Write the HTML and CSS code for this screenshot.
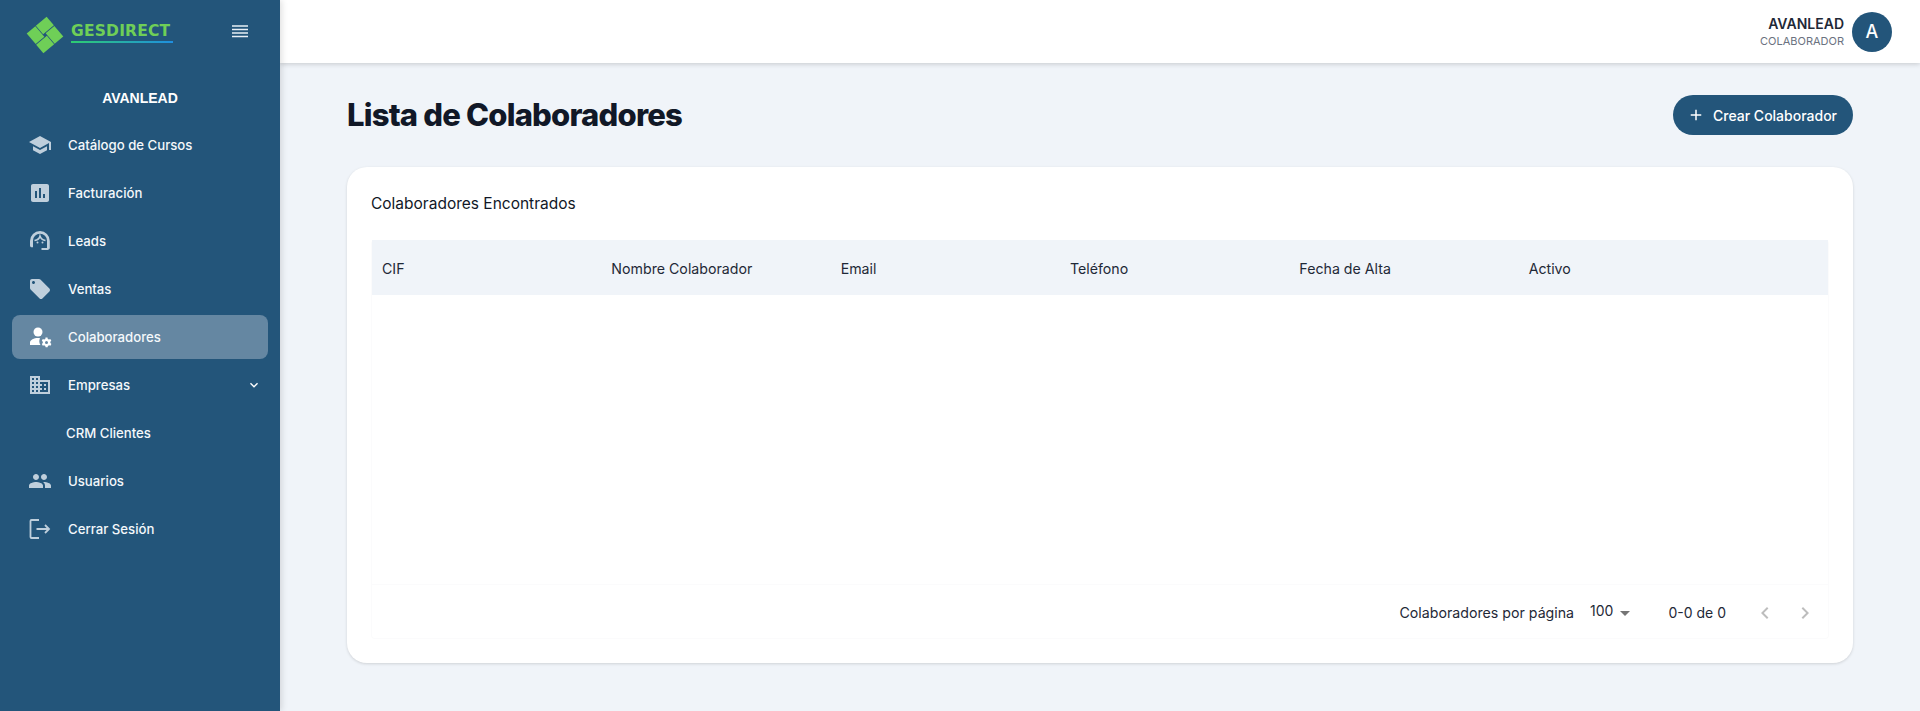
FILE: index.html
```html
<!DOCTYPE html>
<html lang="es">
<head>
<meta charset="utf-8">
<title>Lista de Colaboradores</title>
<link rel="stylesheet" href="styles.css">
</head>
<body>
<div class="app">
  <aside class="sidebar">
    <div class="brand">
      <svg class="logo-mark" width="40" height="40" viewBox="-20 -20 40 40" aria-hidden="true">
        <g fill="#6fcf57" transform="rotate(-40)">
          <rect x="-1" y="-13" width="14" height="11.300" />
          <rect x="1.700" y="-1" width="11.300" height="14" />
          <rect x="-13" y="1.700" width="14" height="11.300" />
          <rect x="-13" y="-13" width="11.300" height="14" />
        </g>
      </svg>
      <div class="wordmark">
        <span class="wordmark-text">GESDIRECT</span>
        <span class="wordmark-line"></span>
      </div>
      <button class="menu-btn" aria-label="Menú">
        <svg width="16" height="14" viewBox="0 0 16 14"><path d="M0 1h16M0 4.500h16M0 8h16M0 11.500h16" stroke="#e8eff5" stroke-width="1.600" fill="none"/></svg>
      </button>
    </div>
    <div class="org">AVANLEAD</div>
    <nav class="nav">
      <a class="nav-item">
        <svg class="nav-icon" viewBox="0 0 24 24"><path d="M5 13.180v4L12 21l7-3.820v-4L12 17l-7-3.820zM12 3 1 9l11 6 9-4.910V17h2V9L12 3z"/></svg>
        <span>Catálogo de Cursos</span>
      </a>
      <a class="nav-item">
        <svg class="nav-icon" viewBox="0 0 24 24"><path d="M19 3H5c-1.100 0-2 .9-2 2v14c0 1.100.9 2 2 2h14c1.100 0 2-.9 2-2V5c0-1.100-.9-2-2-2zM9 17H7v-7h2v7zm4 0h-2V7h2v10zm4 0h-2v-4h2v4z"/></svg>
        <span>Facturación</span>
      </a>
      <a class="nav-item">
        <svg class="nav-icon" viewBox="0 0 24 24"><path d="M12 2A10 10 0 0 0 2 12v4.500c0 1 .8 1.800 1.800 1.800H5v-6.500a7 7 0 0 1 14 0v7.300h-5.500V21h6c1.100 0 2.300-.8 2.300-1.900V12A10 10 0 0 0 12 2z"/><path d="M6.500 11.500C9.500 11 11.500 9.500 12 7c.8 2.500 3 4.200 5.500 4.500" fill="none" stroke="#bfcfdc" stroke-width="1.500"/><circle cx="9.500" cy="13.500" r="1"/><circle cx="14.500" cy="13.500" r="1"/></svg>
        <span>Leads</span>
      </a>
      <a class="nav-item">
        <svg class="nav-icon" viewBox="0 0 24 24"><path d="m21.410 11.580-9-9C12.050 2.220 11.550 2 11 2H4c-1.100 0-2 .9-2 2v7c0 .55.220 1.050.59 1.420l9 9c.36.36.86.58 1.410.58.55 0 1.050-.22 1.410-.59l7-7c.37-.36.59-.86.59-1.410 0-.55-.23-1.060-.59-1.420zM5.500 7C4.670 7 4 6.330 4 5.500S4.670 4 5.500 4 7 4.670 7 5.500 6.330 7 5.500 7z"/></svg>
        <span>Ventas</span>
      </a>
      <a class="nav-item is-active">
        <svg class="nav-icon" viewBox="0 0 24 24"><circle cx="10" cy="7" r="4.500"/><path d="M10 13c-4 0-8 2-8 4.500V20h10.500a7 7 0 0 1-.5-6.800c-.6-.1-1.300-.2-2-.2z"/><path fill-rule="evenodd" d="M17.500 12.500h2l.3 1.400 1.200.6 1.300-.5 1 1.700-1 1 .1 1.300 1 1-1 1.700-1.300-.5-1.200.7-.3 1.400h-2l-.3-1.400-1.200-.7-1.300.5-1-1.700 1-1v-1.300l-1-1 1-1.700 1.300.5 1.200-.6zm1 3.500a1.500 1.500 0 1 0 0 3 1.500 1.500 0 0 0 0-3z"/></svg>
        <span>Colaboradores</span>
      </a>
      <a class="nav-item">
        <svg class="nav-icon" viewBox="0 0 24 24"><path d="M12 7V3H2v18h20V7H12zM6 19H4v-2h2v2zm0-4H4v-2h2v2zm0-4H4V9h2v2zm0-4H4V5h2v2zm4 12H8v-2h2v2zm0-4H8v-2h2v2zm0-4H8V9h2v2zm0-4H8V5h2v2zm10 12h-8v-2h2v-2h-2v-2h2v-2h-2V9h8v10zm-2-8h-2v2h2v-2zm0 4h-2v2h2v-2z"/></svg>
        <span class="nav-label-grow">Empresas</span>
        <svg class="nav-chevron" viewBox="0 0 24 24"><path d="M7.410 8.590 12 13.170l4.590-4.580L18 10l-6 6-6-6z"/></svg>
      </a>
      <a class="nav-item nav-sub"><span>CRM Clientes</span></a>
      <a class="nav-item">
        <svg class="nav-icon" viewBox="0 0 24 24"><path d="M16 11c1.660 0 2.990-1.340 2.990-3S17.660 5 16 5c-1.660 0-3 1.340-3 3s1.340 3 3 3zm-8 0c1.660 0 2.990-1.340 2.990-3S9.660 5 8 5C6.340 5 5 6.340 5 8s1.340 3 3 3zm0 2c-2.330 0-7 1.170-7 3.500V19h14v-2.500c0-2.330-4.670-3.500-7-3.500zm8 0c-.29 0-.62.020-.97.050 1.160.84 1.970 1.970 1.970 3.450V19h6v-2.500c0-2.330-4.670-3.500-7-3.500z"/></svg>
        <span>Usuarios</span>
      </a>
      <a class="nav-item">
        <svg class="nav-icon nav-icon-line" viewBox="0 0 24 24"><path d="M11 3H3.500a1 1 0 0 0-1 1v16a1 1 0 0 0 1 1H11M8.500 12H21M17 8l4 4-4 4"/></svg>
        <span>Cerrar Sesión</span>
      </a>
    </nav>
  </aside>
  <div class="main">
    <header class="topbar">
      <div class="user">
        <div class="user-name">AVANLEAD</div>
        <div class="user-role">COLABORADOR</div>
      </div>
      <div class="avatar">A</div>
    </header>
    <main class="content">
      <div class="page-head">
        <h1 class="page-title">Lista de Colaboradores</h1>
        <button class="primary-btn">
          <svg width="18" height="18" viewBox="0 0 24 24"><path d="M12 5v14M5 12h14" stroke="#fff" stroke-width="2" fill="none"/></svg>
          <span>Crear Colaborador</span>
        </button>
      </div>
      <section class="card">
        <h2 class="card-title">Colaboradores Encontrados</h2>
        <div class="grid">
          <div class="grid-head">
            <div>CIF</div>
            <div>Nombre Colaborador</div>
            <div>Email</div>
            <div>Teléfono</div>
            <div>Fecha de Alta</div>
            <div>Activo</div>
          </div>
          <div class="grid-body"></div>
          <div class="grid-foot">
            <span>Colaboradores por página</span>
            <span class="page-size">100<svg width="24" height="24" viewBox="0 0 24 24"><path d="m7 10 5 5 5-5z" fill="#757575"/></svg></span>
            <span class="range">0-0 de 0</span>
            <span class="pager">
              <svg width="24" height="24" viewBox="0 0 24 24"><path d="M15.410 7.410 14 6l-6 6 6 6 1.410-1.410L10.830 12z" fill="#bdbdbd"/></svg>
              <svg width="24" height="24" viewBox="0 0 24 24"><path d="M10 6 8.590 7.410 13.170 12l-4.580 4.590L10 18l6-6z" fill="#bdbdbd"/></svg>
            </span>
          </div>
        </div>
      </section>
    </main>
  </div>
</div>
</body>
</html>
```
FILE: styles.css
```css
* { box-sizing: border-box; }
html, body { margin: 0; height: 100%; }
body { font-family: "Inter", "Noto Sans", sans-serif; color: #111827; background: #f0f4f9; }
.app { display: flex; height: 711px; overflow: hidden; }

.sidebar { width: 280px; flex: none; background: #23557a; color: #fff; box-shadow: 2px 0 6px rgba(0,0,0,.12); position: relative; z-index: 2; padding: 0 12px; }
.brand { height: 63px; display: flex; align-items: center; padding-left: 13px; }
.logo-mark { flex: none; margin-top: 7px; }
.wordmark { display: flex; flex-direction: column; margin-left: 6px; margin-top: 2px; width: 102px; }
.wordmark-text { font: 700 15.500px/16px "DejaVu Sans", sans-serif; color: #6fcf57; letter-spacing: .2px; white-space: nowrap; }
.wordmark-line { height: 2px; margin-top: 2px; background: linear-gradient(90deg, #2ecc71, #1f8fe0); }
.menu-btn { background: none; border: 0; padding: 0; margin-left: 59px; display: flex; }

.org { text-align: center; font: 700 14px/20px "Liberation Sans", sans-serif; margin-top: 25px; margin-bottom: 15px; }
.nav { display: flex; flex-direction: column; gap: 4px; }
.nav-item { height: 44px; border-radius: 8px; display: flex; align-items: center; padding: 0 4px 0 16px; font-size: 13.200px; font-weight: 500; color: #f4f8fb; }
.nav-item.is-active { background: #6587a2; }
.nav-icon { width: 24px; height: 24px; fill: #bfcfdc; flex: none; margin-right: 16px; }
.is-active .nav-icon { fill: #fff; }
.nav-icon-line { fill: none; stroke: #bfcfdc; stroke-width: 1.800; }
.nav-label-grow { flex: 1; }
.nav-chevron { width: 16px; height: 16px; fill: #fff; flex: none; margin-right: 2px; }
.nav-sub { padding-left: 54px; }

.main { flex: 1; min-width: 0; display: flex; flex-direction: column; }
.topbar { height: 63px; flex: none; background: #fff; box-shadow: 0 1px 5px rgba(0,0,0,.18); display: flex; align-items: center; justify-content: flex-end; padding: 0 28px 0 0; gap: 8px; position: relative; z-index: 1; }
.user { text-align: right; }
.user-name { font-size: 14px; line-height: 18px; font-weight: 600; color: #1f2937; }
.user-role { font-size: 11px; line-height: 15px; color: #6b7280; margin-top: 1px; }
.avatar { width: 40px; height: 40px; border-radius: 50%; background: #23557a; color: #fff; display: flex; align-items: center; justify-content: center; font-size: 18px; font-weight: 500; }

.content { flex: 1; padding: 32px 67px 0 67px; }
.page-head { display: flex; align-items: center; justify-content: space-between; height: 40px; }
.page-title { margin: 0; font-size: 31px; line-height: 40px; font-weight: 800; color: #111827; letter-spacing: -.8px; }
.primary-btn { height: 40px; width: 180px; border: 0; border-radius: 20px; background: #23557a; color: #fff; display: flex; align-items: center; gap: 8px; padding: 0 0 0 14px; font: 500 14px "Inter", sans-serif; }

.card { margin-top: 32px; height: 496px; background: #fff; border-radius: 20px; box-shadow: 0 1px 3px rgba(0,0,0,.14); padding: 24px 24px 0; }
.card-title { margin: 0; font-size: 15.500px; line-height: 26px; font-weight: 400; color: #111827; }
.grid { margin-top: 23px; height: 399px; display: flex; flex-direction: column; border: 1px solid #fbfbfc; border-top: 0; border-radius: 4px; }
.grid-head { height: 55px; flex: none; background: #f0f4f9; display: grid; grid-template-columns: repeat(6, 229.330px) 1fr; align-items: center; font-size: 14.200px; color: #1f2937; padding-top: 1px; }
.grid-head > div { padding-left: 10px; }
.grid-body { flex: 1; border-bottom: 1px solid #fbfbfc; }
.grid-foot { height: 53px; flex: none; display: flex; align-items: center; justify-content: flex-end; font-size: 14.200px; color: #1f2937; padding: 2px 11px 0 0; }
.page-size { display: flex; align-items: center; margin-left: 16px; margin-top: -4px; font-size: 14px; }
.page-size svg { margin-top: 4px; }
.range { margin-left: 31px; font-size: 14px; }
.pager { display: flex; gap: 16px; margin-left: 27px; }
```
